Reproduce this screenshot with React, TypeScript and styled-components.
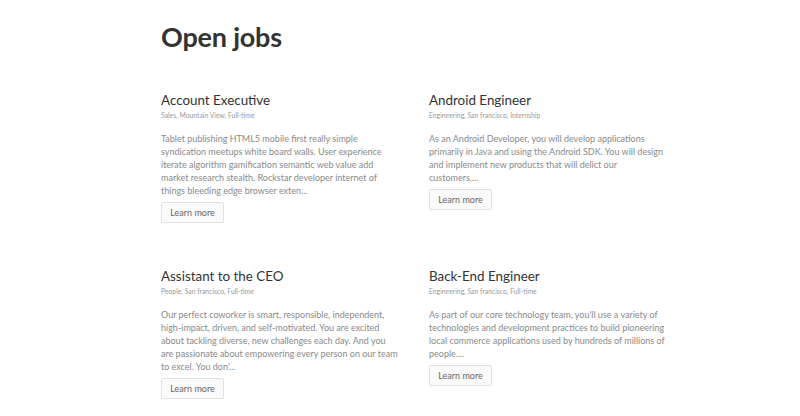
import * as React from "react";
import styled, { createGlobalStyle } from "styled-components";

type Job = {
  title: string;
  meta: string;
  text: string;
};

const jobs: Job[] = [
  {
    title: "Account Executive",
    meta: "Sales, Mountain View, Full-time",
    text:
      "Tablet publishing HTML5 mobile first really simple syndication meetups white board walls. User experience iterate algorithm gamification semantic web value add market research stealth. Rockstar developer internet of things bleeding edge browser exten...",
  },
  {
    title: "Android Engineer",
    meta: "Engineering, San francisco, Internship",
    text:
      "As an Android Developer, you will develop applications primarily in Java and using the Android SDK. You will design and implement new products that will delict our customers....",
  },
  {
    title: "Assistant to the CEO",
    meta: "People, San francisco, Full-time",
    text:
      "Our perfect coworker is smart, responsible, independent, high-impact, driven, and self-motivated. You are excited about tackling diverse, new challenges each day. And you are passionate about empowering every person on our team to excel. You don'...",
  },
  {
    title: "Back-End Engineer",
    meta: "Engineering, San francisco, Full-time",
    text:
      "As part of our core technology team, you'll use a variety of technologies and development practices to build pioneering local commerce applications used by hundreds of millions of people....",
  },
];

const GlobalStyle = createGlobalStyle`
  html, body {
    margin: 0;
    padding: 0;
    background: #ffffff;
  }
  body {
    font-family: Lato, "Open Sans", sans-serif;
    color: #333333;
  }
`;

const Page = styled.div`
  width: 800px;
  height: 416px;
  overflow: hidden;
  padding: 20px 0 0 161px;
  box-sizing: border-box;
`;

const Heading = styled.h1`
  margin: 0;
  font-size: 27px;
  font-weight: 700;
  line-height: 34px;
  color: #333333;
  letter-spacing: -0.2px;
`;

const Grid = styled.div`
  display: grid;
  grid-template-columns: 237px 237px;
  column-gap: 31px;
  row-gap: 44px;
  margin-top: 37px;
`;

const Card = styled.div`
  display: flex;
  flex-direction: column;
  align-items: flex-start;
`;

const Title = styled.h2`
  margin: 0;
  font-size: 13.4px;
  font-weight: 400;
  line-height: 18px;
  color: #333333;
`;

const Meta = styled.div`
  font-size: 6.8px;
  line-height: 10px;
  color: #9a9a9a;
  margin-top: 1px;
`;

const Text = styled.p`
  margin: 12px 0 0;
  font-size: 9px;
  line-height: 13px;
  color: #8a8a8a;
`;

const Button = styled.button`
  margin-top: 5px;
  width: 63px;
  height: 21px;
  padding: 0;
  border: 1px solid #e2e2e2;
  border-radius: 2px;
  background: #fafafa;
  font-family: Lato, "Open Sans", sans-serif;
  font-size: 9px;
  color: #666666;
`;

export default function App() {
  return (
    <>
      <GlobalStyle />
      <Page>
        <Heading>Open jobs</Heading>
        <Grid>
          {jobs.map((job) => (
            <Card key={job.title}>
              <Title>{job.title}</Title>
              <Meta>{job.meta}</Meta>
              <Text>{job.text}</Text>
              <Button>Learn more</Button>
            </Card>
          ))}
        </Grid>
      </Page>
    </>
  );
}
